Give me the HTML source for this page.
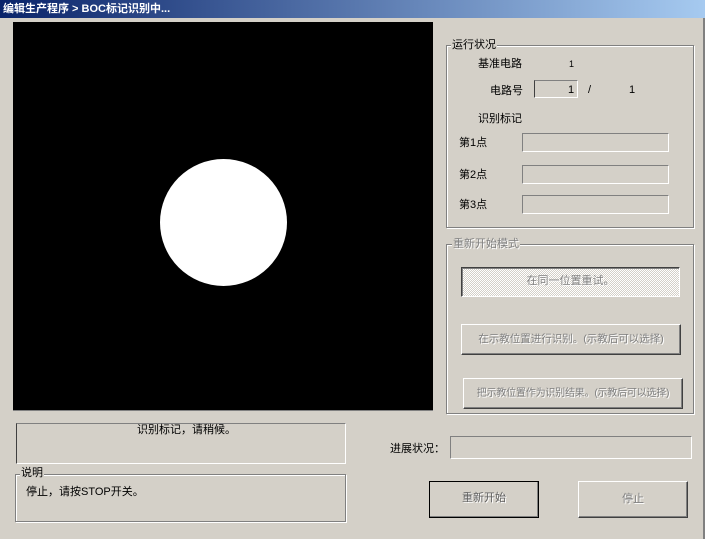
<!DOCTYPE html>
<html><head><meta charset="utf-8"><style>
*{margin:0;padding:0;box-sizing:border-box}
body{width:705px;height:539px;background:#d4d0c8;position:relative;overflow:hidden;font-family:"Liberation Sans","Noto Sans CJK SC","WenQuanYi Zen Hei",sans-serif;font-size:11px;color:#000}
.a{position:absolute}
.title{left:0;top:0;width:705px;height:18px;background:linear-gradient(90deg,#0a246a,#a6caf0);color:#fff;font-weight:bold;font-size:11px;line-height:18px;padding-left:3px}
.sunk{border:1px solid;border-color:#808080 #fff #fff #808080}
.grp{border:1px solid #808080;box-shadow:1px 1px 0 #fff inset, 1px 1px 0 #fff}
.lg{background:#d4d0c8;padding:0 1px;line-height:12px}
.btn{border:1px solid;border-color:#fff #404040 #404040 #fff;box-shadow:inset -1px -1px 0 #808080;text-align:center;color:#808080;text-shadow:1px 1px 0 #fff;white-space:nowrap}
.t{line-height:12px;white-space:nowrap}
</style></head><body>
<div class="a title">编辑生产程序 &gt; BOC标记识别中...</div>
<div class="a" style="left:703px;top:18px;width:2px;height:521px;background:#808080"></div>
<div class="a" style="left:13px;top:22px;width:420px;height:389px;background:#000;border-bottom:1px solid #808080"></div>
<div class="a" style="left:160px;top:159px;width:127px;height:127px;border-radius:50%;background:#fff"></div>

<div class="a sunk" style="left:16px;top:423px;width:330px;height:41px;border-left-color:#404040;border-top-color:#808080"></div>
<div class="a t" style="left:137px;top:424px">识别标记，请稍候。</div>
<div class="a grp" style="left:15px;top:474px;width:331px;height:48px"></div>
<div class="a lg t" style="left:20px;top:467px">说明</div>
<div class="a t" style="left:26px;top:486px">停止，请按STOP开关。</div>

<div class="a grp" style="left:446px;top:45px;width:248px;height:183px"></div>
<div class="a lg t" style="left:451px;top:39px">运行状况</div>
<div class="a t" style="left:478px;top:58px">基准电路</div>
<div class="a t" style="left:569px;top:58px;font-size:9px">1</div>
<div class="a t" style="left:490px;top:85px">电路号</div>
<div class="a sunk" style="left:534px;top:80px;width:44px;height:18px;border-color:#808080 #fff #fff #404040"></div>
<div class="a t" style="left:568px;top:84px">1</div>
<div class="a t" style="left:588px;top:84px">/</div>
<div class="a t" style="left:629px;top:84px">1</div>
<div class="a t" style="left:478px;top:113px">识别标记</div>
<div class="a t" style="left:459px;top:137px">第1点</div>
<div class="a sunk" style="left:522px;top:133px;width:147px;height:19px"></div>
<div class="a t" style="left:459px;top:169px">第2点</div>
<div class="a sunk" style="left:522px;top:165px;width:147px;height:19px"></div>
<div class="a t" style="left:459px;top:199px">第3点</div>
<div class="a sunk" style="left:522px;top:195px;width:147px;height:19px"></div>

<div class="a grp" style="left:446px;top:244px;width:248px;height:170px"></div>
<div class="a lg t" style="left:452px;top:238px;color:#808080;text-shadow:1px 1px 0 #fff">重新开始模式</div>
<div class="a btn" style="left:461px;top:267px;width:219px;height:30px;line-height:27px;border-color:#404040 #fff #fff #404040;box-shadow:inset 1px 1px 0 #808080;background:repeating-conic-gradient(#d4d0c8 0 25%,#fff 0 50%) 0 0/2px 2px">在同一位置重试。</div>
<div class="a btn" style="left:461px;top:324px;width:220px;height:31px;line-height:29px;font-size:10.5px">在示教位置进行识别。(示教后可以选择)</div>
<div class="a btn" style="left:463px;top:378px;width:220px;height:31px;line-height:29px;font-size:10px;letter-spacing:-0.2px">把示教位置作为识别结果。(示教后可以选择)</div>

<div class="a t" style="left:390px;top:443px">进展状况：</div>
<div class="a sunk" style="left:450px;top:436px;width:242px;height:23px"></div>
<div class="a btn" style="left:429px;top:481px;width:110px;height:37px;line-height:34px;outline:1px solid #000;outline-offset:-1px;border:none;box-shadow:inset 1px 1px 0 #fff,inset -2px -2px 0 #808080;color:#606060">重新开始</div>
<div class="a btn" style="left:578px;top:481px;width:110px;height:37px;line-height:35px">停止</div>
</body></html>
